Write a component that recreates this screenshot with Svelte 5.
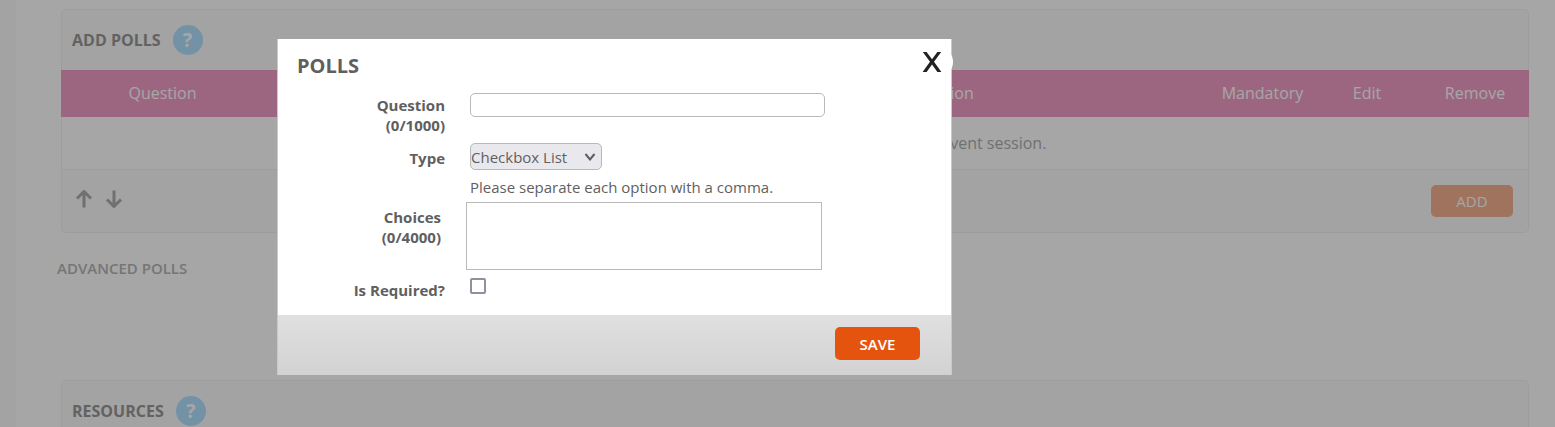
<script lang="ts">
    let question = $state('');
    let choices = $state('');
    let type = $state('Checkbox List');
    let required = $state(false);
    let open = $state(true);

    const types = ['Checkbox List', 'Radio List', 'Free Text'];
</script>

{#snippet help()}
    <button class="help" type="button" aria-label="Help">?</button>
{/snippet}

<div class="page">
    <section class="panel">
        <header class="panel-head">
            <h2>ADD POLLS</h2>
            {@render help()}
        </header>
        <table>
            <colgroup>
                <col class="col-question">
                <col class="col-type">
                <col>
                <col class="col-mandatory">
                <col class="col-action">
                <col class="col-action">
            </colgroup>
            <thead>
                <tr>
                    <th>Question</th>
                    <th>Type</th>
                    <th>Description</th>
                    <th>Mandatory</th>
                    <th>Edit</th>
                    <th>Remove</th>
                </tr>
            </thead>
            <tbody>
                <tr>
                    <td colspan="6">There are currently no poll questions defined for this event session.</td>
                </tr>
            </tbody>
        </table>
        <footer class="panel-foot">
            <div class="order">
                <button type="button" aria-label="Move up">
                    <svg viewBox="0 0 18 18" width="18" height="18"><path d="M9 17.500V2M2 8.500L9 1.500l7 7" /></svg>
                </button>
                <button type="button" aria-label="Move down">
                    <svg viewBox="0 0 18 18" width="18" height="18"><path d="M9 .5V16M2 9.500l7 7 7-7" /></svg>
                </button>
            </div>
            <button class="add" type="button" onclick={() => (open = true)}>ADD</button>
        </footer>
    </section>

    <h3>ADVANCED POLLS</h3>

    <section class="panel">
        <header class="panel-head">
            <h2>RESOURCES</h2>
            {@render help()}
        </header>
    </section>
</div>

{#if open}
    <div class="overlay">
        <div class="modal" role="dialog" aria-labelledby="modal-title">
            <button class="close" type="button" aria-label="Close" onclick={() => (open = false)}>
                <svg viewBox="0 0 20 20" width="20" height="20">
                    <path d="M.8 0h3.800L10 7.200 15.400 0H19.200l-7.200 9.700L19.400 20h-4L10 12.500 4.600 20H.6l7.400-10.300z" />
                </svg>
            </button>
            <h1 id="modal-title">POLLS</h1>
            <form>
                <div class="row">
                    <label for="question">Question<br>({question.length}/1000)</label>
                    <input id="question" type="text" maxlength="1000" bind:value={question}>
                </div>
                <div class="row tall">
                    <label for="type">Type</label>
                    <div>
                        <div class="select">
                            <select id="type" bind:value={type}>
                                {#each types as name}
                                    <option>{name}</option>
                                {/each}
                            </select>
                            <svg viewBox="0 0 12 8" width="12" height="8"><path d="M1.500 1L6 6.500 10.500 1" /></svg>
                        </div>
                        <p>Please separate each option with a comma.</p>
                    </div>
                </div>
                <div class="row tall choices">
                    <label for="choices">Choices<br>({choices.length}/4000)</label>
                    <textarea id="choices" maxlength="4000" bind:value={choices}></textarea>
                </div>
                <div class="row">
                    <label for="required">Is Required?</label>
                    <input id="required" type="checkbox" bind:checked={required}>
                </div>
            </form>
            <footer>
                <button class="save" type="button">SAVE</button>
            </footer>
        </div>
    </div>
{/if}

<style>
    :global(body) {
        margin: 0;
        font-family: 'Open Sans', 'Noto Sans', sans-serif;
        background: #fff;
    }

    button, input, select, textarea {
        box-sizing: border-box;
        margin: 0;
        font-family: inherit;
    }

    .page {
        box-sizing: border-box;
        height: 100vh;
        overflow: hidden;
        padding: 9px 26px 0 45px;
        border-left: 16px solid #fafafa;
    }

    .panel {
        border-radius: 5px;
        background: #fafafa;
        box-shadow: inset 0 0 0 1px #f2f2f2;
    }

    .panel-head {
        display: flex;
        align-items: center;
        gap: 12px;
        height: 61px;
        padding: 0 11px;
    }

    h2 {
        margin: 0;
        font-size: 16px;
        line-height: 24px;
        color: #979797;
    }

    .help {
        width: 30px;
        height: 30px;
        padding: 0;
        border: 0;
        border-radius: 50%;
        background: #b2e0ff;
        color: #fff;
        font-size: 20px;
        font-weight: 700;
        line-height: 30px;
    }

    table {
        width: 100%;
        table-layout: fixed;
        border-spacing: 0;
    }

    .col-question {
        width: 203px;
    }

    .col-type {
        width: 386px;
    }

    .col-mandatory {
        width: 101px;
    }

    .col-action {
        width: 108px;
    }

    th {
        box-sizing: border-box;
        height: 47px;
        padding: 0 0 2px;
        background: #f19dc5;
        color: #fff;
        font-size: 16px;
        font-weight: 400;
    }

    td {
        height: 52px;
        padding: 0;
        border: 1px solid #f2f2f2;
        border-top: 0;
        background: #fff;
        color: #adadad;
        font-size: 16px;
        text-align: center;
    }

    .panel-foot {
        display: flex;
        align-items: center;
        justify-content: space-between;
        box-sizing: border-box;
        height: 63px;
        padding: 0 16px 2px 14px;
    }

    .order {
        display: flex;
        gap: 12px;
        padding-bottom: 3px;
    }

    .order button {
        padding: 0;
        border: 0;
        background: none;
    }

    .order svg {
        display: block;
        fill: none;
        stroke: #acacac;
        stroke-width: 3;
        stroke-linejoin: round;
    }

    .add {
        width: 82px;
        height: 32px;
        border: 0;
        border-radius: 5px;
        background: #f4b191;
        color: #fff;
        font-size: 15px;
    }

    h3 {
        margin: 25px 0 101px -4px;
        font-size: 15px;
        font-weight: 600;
        line-height: 21px;
        color: #b5b5b5;
    }

    .overlay {
        position: fixed;
        inset: 0;
        padding: 39px 0 0 277px;
        background: rgba(0, 0, 0, 0.35);
    }

    .modal {
        position: relative;
        box-sizing: border-box;
        max-width: 675px;
        border: 1px solid #c9c9c9;
        border-width: 0 1px;
        background: #fff;
        color: #5f5f5f;
    }

    .close {
        position: absolute;
        top: 7px;
        right: -2px;
        width: 32px;
        height: 32px;
        padding: 0 10px 0 0;
        border: 0;
        border-radius: 50%;
        background: #fff;
    }

    .close svg {
        display: block;
        margin: 0 auto;
        fill: #222;
    }

    h1 {
        margin: 0;
        padding: 13px 19px;
        font-size: 20px;
        line-height: 28px;
    }

    form {
        display: flex;
        flex-direction: column;
        gap: 8px;
        padding-bottom: 15px;
    }

    .row {
        display: grid;
        grid-template-columns: 167px 1fr;
        column-gap: 25px;
        align-items: start;
    }

    label {
        padding-top: 2px;
        font-size: 15px;
        font-weight: 700;
        line-height: 20px;
        text-align: right;
    }

    .tall label {
        padding-top: 5px;
    }

    .choices {
        grid-template-columns: 163px 1fr;
    }

    input[type='text'] {
        width: 355px;
        height: 24px;
        padding: 0 4px;
        border: 1px solid #b9b9b9;
        border-radius: 5px;
        color: inherit;
        font-size: 15px;
    }

    .select {
        position: relative;
        width: 132px;
    }

    select {
        display: block;
        width: 100%;
        height: 27px;
        padding: 0;
        appearance: none;
        border: 1px solid #b9b9b9;
        border-radius: 5px;
        background: #e9e9ed;
        color: inherit;
        font-size: 15px;
    }

    .select svg {
        position: absolute;
        top: 10px;
        right: 6px;
        fill: none;
        stroke: #5f5f5f;
        stroke-width: 2;
        pointer-events: none;
    }

    p {
        margin: 11px 0 0;
        font-size: 15px;
        line-height: 13px;
    }

    textarea {
        display: block;
        width: 356px;
        height: 68px;
        border: 1px solid #b9b9b9;
        color: inherit;
        font-size: 15px;
        resize: none;
    }

    input[type='checkbox'] {
        width: 16px;
        height: 16px;
        appearance: none;
        border: 2px solid #8f8f9d;
        border-radius: 2px;
        background: #fff;
    }

    input[type='checkbox']:checked {
        background: #8f8f9d;
    }

    .modal footer {
        display: flex;
        justify-content: flex-end;
        padding: 12px 31px 15px;
        background: linear-gradient(#e0e0e0, #d2d2d2);
    }

    .save {
        width: 85px;
        height: 33px;
        border: 0;
        border-radius: 5px;
        background: #e5540f;
        color: #fff;
        font-size: 15px;
        font-weight: 600;
    }
</style>
